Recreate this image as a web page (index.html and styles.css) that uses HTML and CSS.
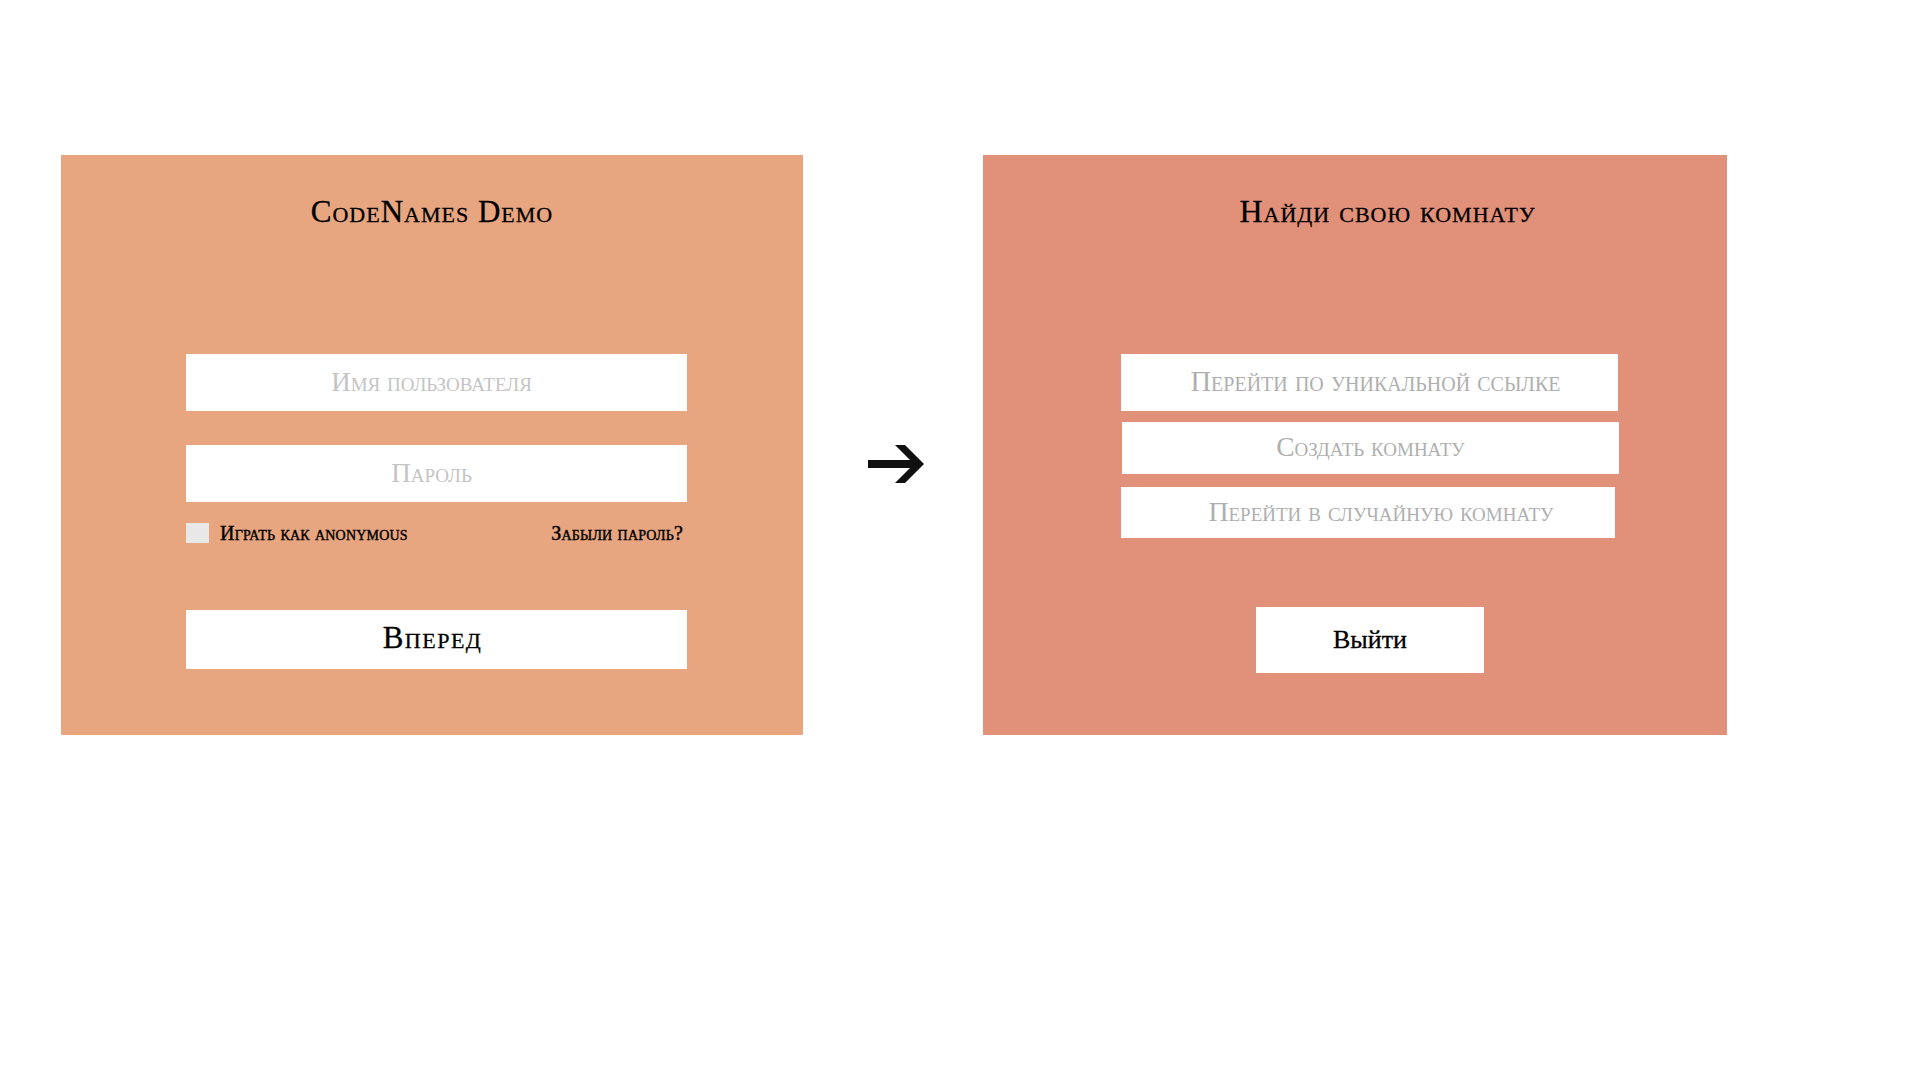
FILE: index.html
```html
<!DOCTYPE html>
<html lang="ru">
<head>
<meta charset="utf-8">
<title>CodeNames Demo</title>
<link rel="stylesheet" href="styles.css">
</head>
<body>
<main class="stage">
  <section class="panel panel-login">
    <h1 class="title">CodeNames Demo</h1>
    <form class="form">
      <input class="field" type="text" placeholder="Имя пользователя">
      <input class="field field-second" type="password" placeholder="Пароль">
      <div class="options">
        <label class="anon"><span class="check"></span>Играть как anonymous</label>
        <a class="forgot">Забыли пароль?</a>
      </div>
      <button class="go" type="button">Вперед</button>
    </form>
  </section>

  <div class="arrow-slot">
    <svg class="arrow" width="56" height="38" viewBox="0 0 56 38">
      <rect x="0" y="15" width="46" height="8" fill="#111"/>
      <polygon points="27,0 37,0 56,19 37,38 27,38 46,19" fill="#111"/>
    </svg>
  </div>

  <section class="panel panel-room">
    <h1 class="title title-room">Найди свою комнату</h1>
    <div class="rooms">
      <input class="room room-link" type="text" placeholder="Перейти по уникальной ссылке">
      <button class="room room-create" type="button">Создать комнату</button>
      <button class="room room-random" type="button">Перейти в случайную комнату</button>
    </div>
    <button class="exit" type="button">Выйти</button>
  </section>
</main>
</body>
</html>
```
FILE: styles.css
```css
* { box-sizing: border-box; }
html, body { margin: 0; padding: 0; background: #fff; }
body {
  font-family: "Liberation Serif", "Times New Roman", serif;
  color: #000;
  width: 1920px;
  height: 1080px;
  overflow: hidden;
}
.stage {
  display: flex;
  align-items: flex-start;
  padding: 155px 0 0 61px;
}
.panel {
  height: 580px;
  display: flex;
  flex-direction: column;
}
.panel-login { width: 742px; background: #e7a680; }
.panel-room { width: 744px; background: #e1907a; }

.title {
  margin: 39px 0 0;
  font-size: 31px;
  line-height: 35px;
  font-weight: normal;
  font-variant: small-caps;
  letter-spacing: 1px;
  text-align: center;
  -webkit-text-stroke: 0.3px #000;
}
.title-room { padding-left: 65px; font-size: 32px; }

.form {
  width: 501px;
  margin: 125px 0 0 125px;
  display: flex;
  flex-direction: column;
}
.field {
  display: block;
  width: 501px;
  height: 57px;
  border: 0;
  outline: 0;
  background: #fff;
  font-family: inherit;
  font-size: 27px;
  font-variant: small-caps;
  text-align: center;
  color: #000;
  padding: 0 10px 0 0;
}
.field::placeholder { color: #c4c4c4; opacity: 1; }
.field-second { margin-top: 34px; }

.options {
  margin-top: 21px;
  height: 20px;
  display: flex;
  align-items: center;
  justify-content: space-between;
  font-size: 20px;
  font-variant: small-caps;
  padding-right: 4px;
  -webkit-text-stroke: 0.4px #000;
}
.anon { display: flex; align-items: center; letter-spacing: 0.2px; }
.check {
  width: 23px;
  height: 20px;
  background: #e8e8e8;
  margin-right: 11px;
}
.forgot { color: #000; letter-spacing: 0.2px; }

.go {
  margin-top: 67px;
  width: 501px;
  height: 59px;
  border: 0;
  background: #fff;
  font-family: inherit;
  font-size: 31px;
  letter-spacing: 1.5px;
  font-variant: small-caps;
  color: #000;
  padding: 0 8px 4px 0;
  -webkit-text-stroke: 0.3px #000;
}

.arrow-slot {
  width: 180px;
  height: 580px;
  display: flex;
  align-items: center;
  justify-content: center;
  padding-top: 37px;
  padding-left: 6px;
}
.arrow { display: block; }

.rooms {
  margin: 125px 0 0 138px;
  display: flex;
  flex-direction: column;
  align-items: flex-start;
}
.room {
  display: block;
  border: 0;
  outline: 0;
  background: #fff;
  font-family: inherit;
  font-size: 27.5px;
  font-variant: small-caps;
  color: #afafaf;
  text-align: center;
  padding: 0 0 2px;
}
.room::placeholder { color: #afafaf; opacity: 1; }
.room-link { width: 497px; height: 57px; padding-left: 12px; font-size: 28.5px; }
.room-create { width: 497px; height: 52px; margin: 11px 0 0 1px; }
.room-random { width: 494px; height: 51px; margin-top: 13px; padding-left: 26px; font-size: 27.8px; }

.exit {
  margin: 69px 0 0 273px;
  width: 228px;
  height: 66px;
  border: 0;
  background: #fff;
  font-family: inherit;
  font-size: 26px;
  color: #000;
  padding: 0;
  -webkit-text-stroke: 0.3px #000;
}
```
